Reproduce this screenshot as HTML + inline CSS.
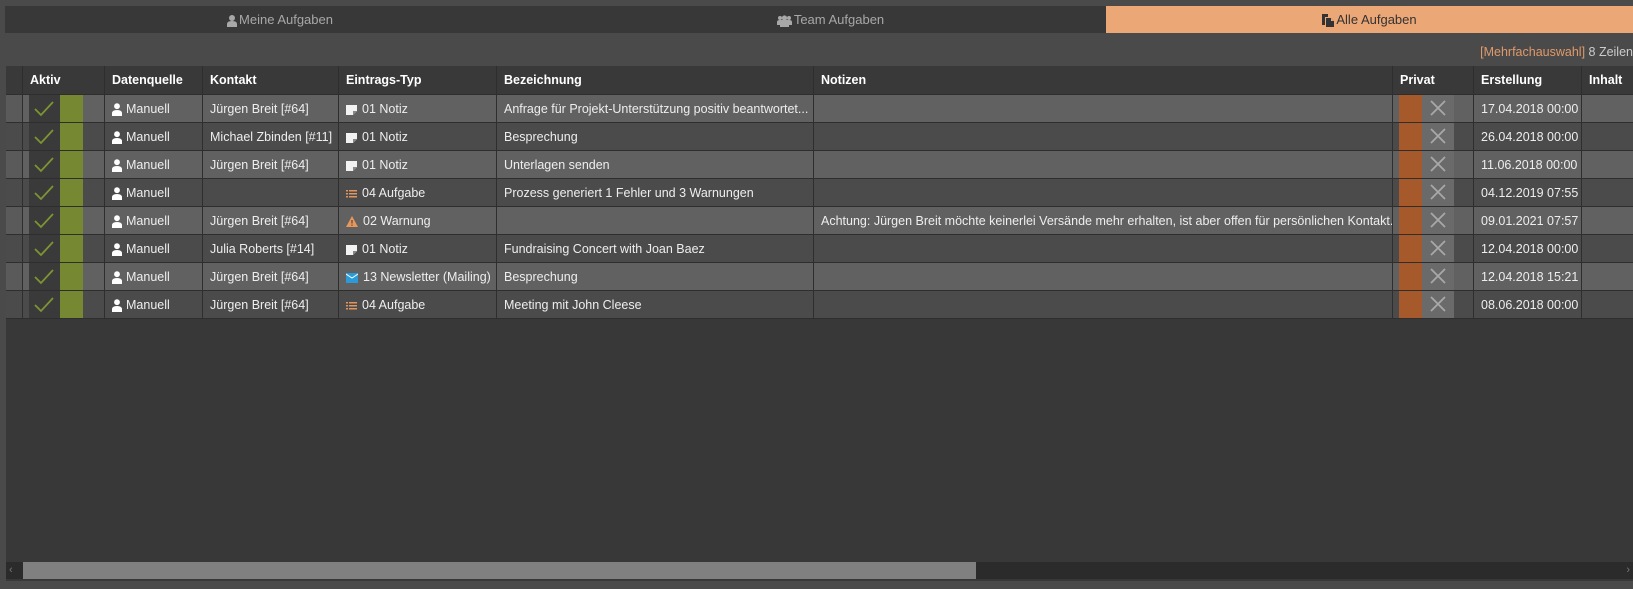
<!DOCTYPE html>
<html><head><meta charset="utf-8"><style>
*{margin:0;padding:0;box-sizing:border-box}
body{width:1633px;height:589px;background:#4a4a4a;font-family:"Liberation Sans",sans-serif;font-size:12.5px;color:#eee;position:relative;overflow:hidden}
.tabs{position:absolute;left:5px;top:6px;width:1628px;height:27px;background:#383838}
.tab{position:absolute;top:0;height:27px;line-height:27px;text-align:center;color:#a8a8a8;font-size:13px}
.info{position:absolute;right:0;top:45px;font-size:12.5px;color:#ccc}
.grid{position:absolute;left:6px;top:66px;width:1627px;height:515px;background:#383838}
.row{position:absolute;left:0;width:1627px;height:28px;border-bottom:1px solid #2e2e2e}
.c{position:absolute;top:0;height:27px;line-height:28px;padding-left:7px;white-space:nowrap;overflow:hidden;border-left:1px solid #2e2e2e}
.hd .c{font-weight:bold;color:#fff;background:#393939;height:28px;line-height:28px}
.l{background:#616161}.d{background:#4b4b4b}
.ico{display:inline-block;vertical-align:middle;margin-right:5px}
</style></head><body>
<div class="tabs">
<div class="tab" style="left:0;width:550px"><svg class="ico" width="10" height="12" viewBox="0 0 10 12" style="margin-right:2px"><circle cx="5" cy="3" r="3" fill="#a8a8a8"/><path d="M0 12V9q0-3 5-3t5 3v3z" fill="#a8a8a8"/></svg>Meine Aufgaben</div>
<div class="tab" style="left:550px;width:551px"><svg class="ico" width="15" height="12" viewBox="0 0 15 12" style="margin-right:2px"><circle cx="3" cy="3" r="2" fill="#a8a8a8"/><circle cx="12" cy="3" r="2" fill="#a8a8a8"/><circle cx="7.5" cy="3" r="2.6" fill="#a8a8a8"/><path d="M0 10V7q0-2 3-2h9q3 0 3 2v3zM3 12V8q0-2 4.5-2T12 8v4z" fill="#a8a8a8"/></svg>Team Aufgaben</div>
<div class="tab" style="left:1101px;width:527px;background:#eca776;color:#333"><svg class="ico" width="12" height="13" viewBox="0 0 12 13" style="margin-right:2px"><path d="M0 0h6v3H3v8H0z" fill="#333"/><path d="M4 4h5l3 3v6H4z" fill="#333"/><path d="M9 4v3h3" fill="#eca776"/></svg>Alle Aufgaben</div>
</div>
<div class="info"><span style="color:#e0996a">[Mehrfachauswahl]</span> 8 Zeilen</div>
<div class="grid">
<div class="row hd" style="top:0;height:29px">
<div class="c" style="left:0;width:16px;border-left:none"></div>
<div class="c" style="left:16px;width:82px">Aktiv</div>
<div class="c" style="left:98px;width:98px">Datenquelle</div>
<div class="c" style="left:196px;width:136px">Kontakt</div>
<div class="c" style="left:332px;width:158px">Eintrags-Typ</div>
<div class="c" style="left:490px;width:317px">Bezeichnung</div>
<div class="c" style="left:807px;width:579px">Notizen</div>
<div class="c" style="left:1386px;width:81px">Privat</div>
<div class="c" style="left:1467px;width:108px">Erstellung</div>
<div class="c" style="left:1575px;width:52px">Inhalt</div>
</div>
<div id="rows"></div>
<div style="position:absolute;left:0;top:496px;width:1627px;height:17px;background:#2b2b2b"></div>
<div style="position:absolute;left:17px;top:496px;width:953px;height:17px;background:#808080"></div>
<div style="position:absolute;left:3px;top:498px;color:#777;font-size:11px">‹</div>
<div style="position:absolute;right:3px;top:498px;color:#777;font-size:11px">›</div>
</div>
<script>
var note='<svg class="ico" width="11" height="10" viewBox="0 0 11 10"><path d="M0 0h11v6l-4 4H0z" fill="#f2f2f2"/><path d="M7 10V6h4" fill="#888"/></svg>';
var task='<svg class="ico" width="11" height="8" viewBox="0 0 11 8"><path d="M0 0h2v1.5H0zM3 0h8v1.5H3zM0 3h2v1.5H0zM3 3h8v1.5H3zM0 6h2v1.5H0zM3 6h8v1.5H3z" fill="#e0965e"/></svg>';
var warn='<svg class="ico" width="12" height="11" viewBox="0 0 12 11"><path d="M6 0l6 11H0z" fill="#e8965a"/><path d="M5.4 4h1.2v3.5H5.4zM5.4 8.5h1.2v1.2H5.4z" fill="#4b4b4b"/></svg>';
var mail='<svg class="ico" width="12" height="10" viewBox="0 0 12 10"><rect width="12" height="10" fill="#2a9ad8"/><path d="M0 1l6 4 6-4" stroke="#fff" stroke-width="1" fill="none"/></svg>';
var person='<svg class="ico" width="10" height="13" viewBox="0 0 10 13" style="margin-right:4px"><circle cx="5" cy="3.2" r="2.9" fill="#fff"/><path d="M0 13V10.3Q0 7 5 7T10 10.3V13z" fill="#fff"/></svg>';
var R=[["Jürgen Breit [#64]",note,"01 Notiz","Anfrage für Projekt-Unterstützung positiv beantwortet...","","17.04.2018 00:00"],
["Michael Zbinden [#11]",note,"01 Notiz","Besprechung","","26.04.2018 00:00"],
["Jürgen Breit [#64]",note,"01 Notiz","Unterlagen senden","","11.06.2018 00:00"],
["",task,"04 Aufgabe","Prozess generiert 1 Fehler und 3 Warnungen","","04.12.2019 07:55"],
["Jürgen Breit [#64]",warn,"02 Warnung","","Achtung: Jürgen Breit möchte keinerlei Versände mehr erhalten, ist aber offen für persönlichen Kontakt.","09.01.2021 07:57"],
["Julia Roberts [#14]",note,"01 Notiz","Fundraising Concert with Joan Baez","","12.04.2018 00:00"],
["Jürgen Breit [#64]",mail,"13 Newsletter (Mailing)","Besprechung","","12.04.2018 15:21"],
["Jürgen Breit [#64]",task,"04 Aufgabe","Meeting mit John Cleese","","08.06.2018 00:00"]];
var h='';
R.forEach(function(r,i){var cl=i%2?'d':'l';var t=29+i*28;
h+='<div class="row '+cl+'" style="top:'+t+'px">'+
'<div class="c" style="left:0;width:16px;border-left:none;background:'+(i%2?'#4b4b4b':'#5a5a5a')+'"></div>'+
'<div class="c" style="left:16px;width:82px;padding:0"><div style="position:absolute;left:6px;top:0;width:31px;height:27px;background:#3a3a3a"><svg width="31" height="27" viewBox="0 0 31 27"><path d="M6 14l6 6 12-13" stroke="#7d9432" stroke-width="1.8" fill="none"/></svg></div><div style="position:absolute;left:37px;top:0;width:23px;height:27px;background:#778833"></div></div>'+
'<div class="c" style="left:98px;width:98px">'+person+'Manuell</div>'+
'<div class="c" style="left:196px;width:136px">'+r[0]+'</div>'+
'<div class="c" style="left:332px;width:158px">'+r[1]+r[2]+'</div>'+
'<div class="c" style="left:490px;width:317px">'+r[3]+'</div>'+
'<div class="c" style="left:807px;width:579px">'+r[4]+'</div>'+
'<div class="c" style="left:1386px;width:81px;padding:0"><div style="position:absolute;left:6px;top:0;width:23px;height:27px;background:#a65a2c"></div><div style="position:absolute;left:29px;top:0;width:32px;height:27px;background:#6a6a6a"><svg width="32" height="27" viewBox="0 0 32 27"><path d="M9 6l14 14M23 6L9 20" stroke="#a8a8a8" stroke-width="1.8"/></svg></div></div>'+
'<div class="c" style="left:1467px;width:108px">'+r[5]+'</div>'+
'<div class="c" style="left:1575px;width:52px"></div></div>';});
document.getElementById('rows').innerHTML=h;
</script>
</body></html>
